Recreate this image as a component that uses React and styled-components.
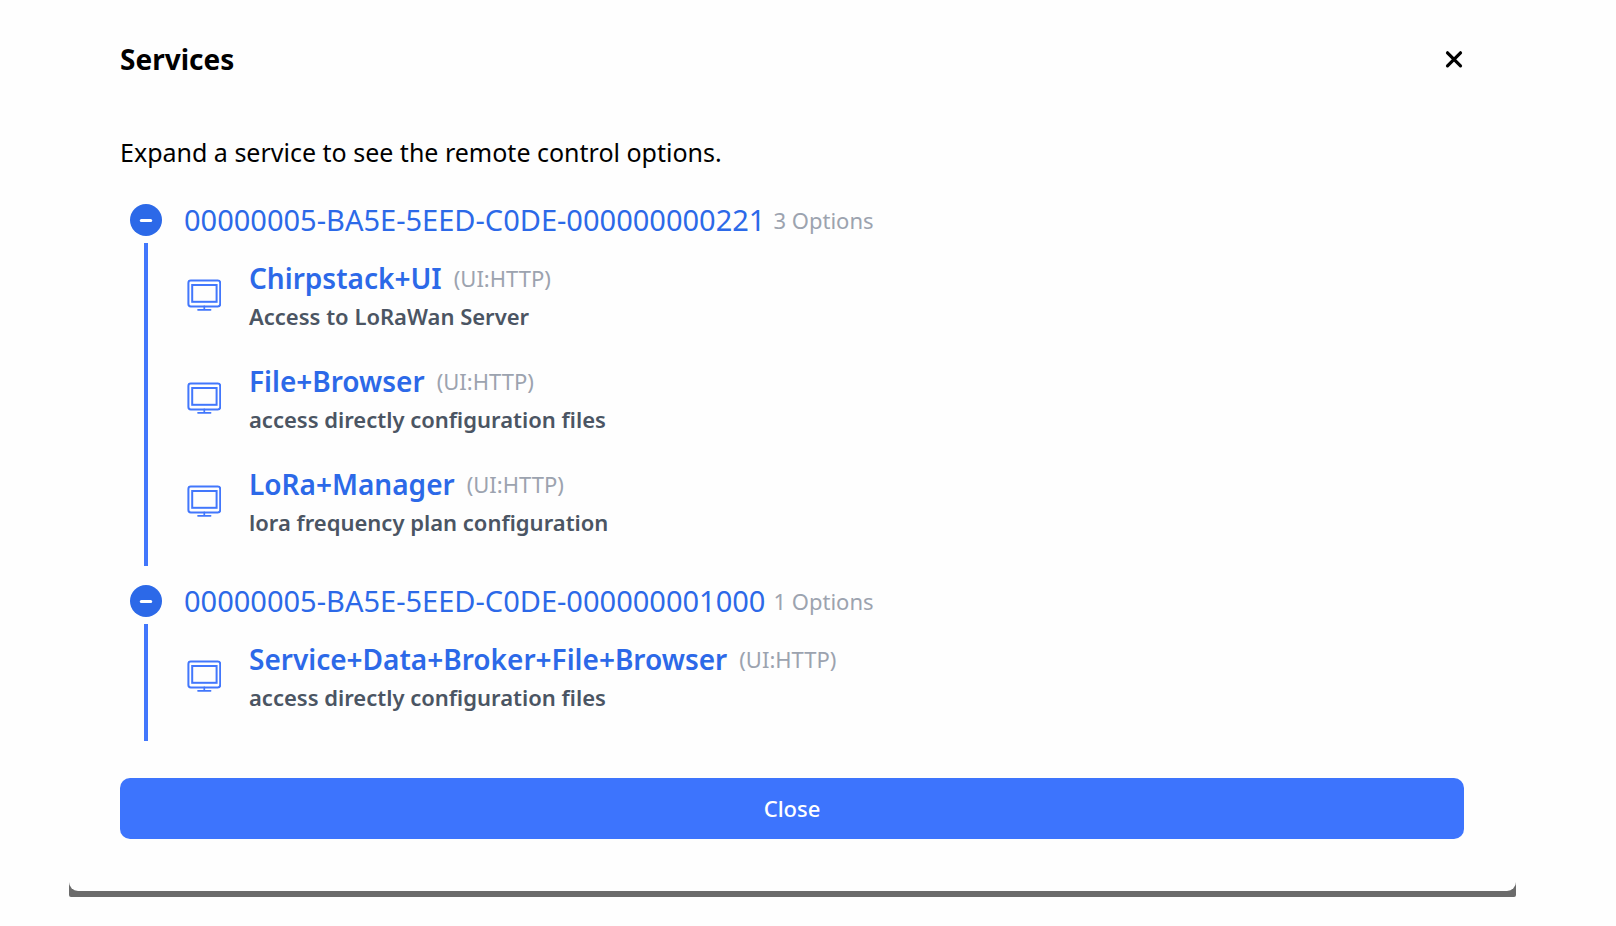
import React, { useState } from "react";
import styled, { createGlobalStyle } from "styled-components";

const GlobalStyle = createGlobalStyle`
    * {
        box-sizing: border-box;
    }

    body {
        margin: 0;
        background: #fefefe;
        font-family: "Noto Sans", "Open Sans", sans-serif;
    }

    button {
        border: none;
        padding: 0;
        background: none;
        font-family: inherit;
        cursor: pointer;
    }
`;

const Page = styled.div`
    padding: 0 100px 29px 69px;
`;

const Backdrop = styled.div`
    background: #6b6b6b;
    padding-bottom: 6px;
    border-radius: 0 0 2px 2px;
`;

const Dialog = styled.div`
    background: #fefefe;
    padding: 40px 52px 52px 51px;
    border-radius: 0 0 9px 9px;
`;

const Header = styled.header`
    display: flex;
    align-items: center;
    justify-content: space-between;
`;

const Title = styled.h2`
    margin: 0;
    font-size: 28px;
    line-height: 38px;
    font-weight: 700;
    color: #000;
`;

const IconButton = styled.button`
    display: flex;
    color: #000;
`;

const Intro = styled.p`
    margin: 55px 0 33px;
    font-size: 25px;
    line-height: 38px;
    color: #000;
`;

const ServiceList = styled.div`
    display: flex;
    flex-direction: column;
    gap: 19px;
`;

const ServiceHeader = styled.div`
    display: flex;
    align-items: center;
    height: 32px;
    padding-left: 10px;
`;

const Toggle = styled.button`
    display: flex;
    align-items: center;
    color: #2c69e8;
    font-size: 29px;
    line-height: 32px;
    gap: 22px;
`;

const Badge = styled.span`
    display: flex;
    align-items: center;
    justify-content: center;
    width: 32px;
    height: 32px;
    border-radius: 50%;
    background: #2c69e8;
    color: #fff;
`;

const Meta = styled.span`
    margin-left: ${(props) => props.$gap}px;
    font-size: 22px;
    color: #9ca3af;
`;

const OptionList = styled.ul`
    list-style: none;
    margin: 7px 0 0 24px;
    padding: 0 0 14px 39px;
    border-left: 4px solid #4277fc;
`;

const Option = styled.li`
    display: flex;
    gap: 28px;
    height: 103px;
    padding-top: 16px;
`;

const OptionIcon = styled.span`
    display: flex;
    align-items: center;
    height: 72px;
    color: #4277fc;
`;

const OptionName = styled.div`
    display: flex;
    align-items: center;
    height: 38px;
`;

const OptionLink = styled.a`
    color: #2c69e8;
    font-size: 28px;
    font-weight: 600;
    text-decoration: none;
`;

const Description = styled.p`
    margin: 0;
    color: #4b5563;
    font-size: 22px;
    line-height: 38px;
    font-weight: 600;
`;

const CloseButton = styled.button`
    display: block;
    width: 100%;
    height: 61px;
    margin-top: 37px;
    padding-bottom: 2px;
    border-radius: 10px;
    background: #3d74fd;
    color: #fff;
    font-size: 22px;
    font-weight: 500;
`;

const CloseIcon = () => (
    <svg width="20" height="20" viewBox="0 0 20 20" stroke="currentColor" strokeWidth="3.2" strokeLinecap="round">
        <path d="M3.5 3.8l13 13M16.5 3.8l-13 13" />
    </svg>
);

const ToggleIcon = ({ open }) => (
    <svg width="16" height="16" viewBox="0 0 16 16" stroke="currentColor" strokeWidth="3" strokeLinecap="round">
        <path d={open ? "M3.3 8.5h9.4" : "M3.3 8.5h9.4M8 3.8v9.4"} />
    </svg>
);

const MonitorIcon = () => (
    <svg width="34" height="32" viewBox="0 0 34 32" fill="none" stroke="currentColor" strokeWidth="2" strokeLinecap="round">
        <rect x="1.4" y="1.6" width="31.8" height="25.8" rx="2.4" />
        <rect x="5.2" y="6" width="24.4" height="16.8" />
        <path d="M17.3 27.4v3M11 30.8h12.6" strokeWidth="1.7" />
    </svg>
);

const services = [
    {
        id: "00000005-BA5E-5EED-C0DE-000000000221",
        options: [
            { name: "Chirpstack+UI", type: "UI:HTTP", description: "Access to LoRaWan Server" },
            { name: "File+Browser", type: "UI:HTTP", description: "access directly configuration files" },
            { name: "LoRa+Manager", type: "UI:HTTP", description: "lora frequency plan configuration" },
        ],
    },
    {
        id: "00000005-BA5E-5EED-C0DE-000000001000",
        options: [
            { name: "Service+Data+Broker+File+Browser", type: "UI:HTTP", description: "access directly configuration files" },
        ],
    },
];

const Service = ({ service }) => {
    const [open, setOpen] = useState(true);

    return (
        <section>
            <ServiceHeader>
                <Toggle aria-expanded={open} onClick={() => setOpen(!open)}>
                    <Badge><ToggleIcon open={open} /></Badge>
                    {service.id}
                </Toggle>
                <Meta $gap={8}>{service.options.length} Options</Meta>
            </ServiceHeader>
            {open && (
                <OptionList>
                    {service.options.map((option) => (
                        <Option key={option.name}>
                            <OptionIcon><MonitorIcon /></OptionIcon>
                            <div>
                                <OptionName>
                                    <OptionLink href="#">{option.name}</OptionLink>
                                    <Meta $gap={12}>({option.type})</Meta>
                                </OptionName>
                                <Description>{option.description}</Description>
                            </div>
                        </Option>
                    ))}
                </OptionList>
            )}
        </section>
    );
};

const App = () => {
    const [visible, setVisible] = useState(true);

    const handleClose = () => {
        setVisible(false);
    };

    return (
        <Page>
            <GlobalStyle />
            {visible && (
                <Backdrop>
                    <Dialog role="dialog" aria-labelledby="services-title">
                        <Header>
                            <Title id="services-title">Services</Title>
                            <IconButton aria-label="Dismiss" onClick={handleClose}><CloseIcon /></IconButton>
                        </Header>
                        <Intro>Expand a service to see the remote control options.</Intro>
                        <ServiceList>
                            {services.map((service) => (
                                <Service key={service.id} service={service} />
                            ))}
                        </ServiceList>
                        <CloseButton onClick={handleClose}>Close</CloseButton>
                    </Dialog>
                </Backdrop>
            )}
        </Page>
    );
};

export default App;
